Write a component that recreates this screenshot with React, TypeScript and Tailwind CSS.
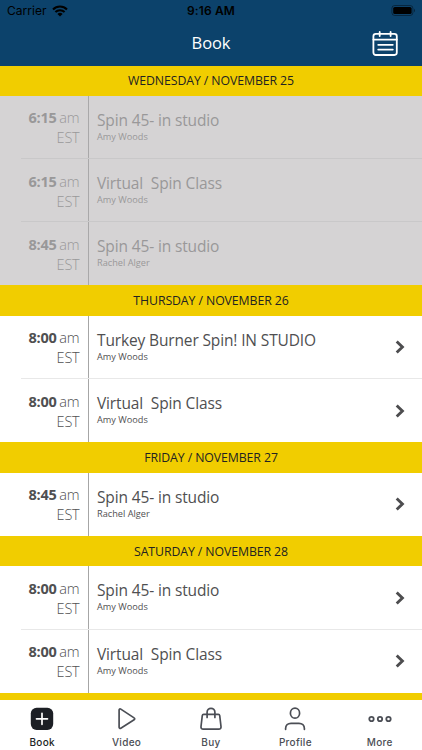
interface IClassItem {
    time: string;
    title: string;
    teacher: string;
}

interface IDay {
    label: string;
    past?: boolean;
    classes: IClassItem[];
}

const days: IDay[] = [
    {
        label: 'WEDNESDAY / NOVEMBER 25',
        past: true,
        classes: [
            { time: '6:15', title: 'Spin 45- in studio', teacher: 'Amy Woods' },
            { time: '6:15', title: 'Virtual  Spin Class', teacher: 'Amy Woods' },
            { time: '8:45', title: 'Spin 45- in studio', teacher: 'Rachel Alger' },
        ],
    },
    {
        label: 'THURSDAY / NOVEMBER 26',
        classes: [
            { time: '8:00', title: 'Turkey Burner Spin! IN STUDIO', teacher: 'Amy Woods' },
            { time: '8:00', title: 'Virtual  Spin Class', teacher: 'Amy Woods' },
        ],
    },
    {
        label: 'FRIDAY / NOVEMBER 27',
        classes: [
            { time: '8:45', title: 'Spin 45- in studio', teacher: 'Rachel Alger' },
        ],
    },
    {
        label: 'SATURDAY / NOVEMBER 28',
        classes: [
            { time: '8:00', title: 'Spin 45- in studio', teacher: 'Amy Woods' },
            { time: '8:00', title: 'Virtual  Spin Class', teacher: 'Amy Woods' },
        ],
    },
];

const StatusBar = () => {
    return (
        <div className="grid grid-cols-3 items-center h-[22px] pl-[7px] pr-[6px] text-black font-['Inter',sans-serif]">
            <div className="flex items-center gap-[5px]">
                <span className="text-[12px] leading-none tracking-[0.05px]">Carrier</span>
                <svg className="w-[16px] h-[12px] -mt-[1px]" viewBox="0 0 16 12" fill="none" stroke="currentColor" strokeWidth="2.1">
                    <path d="M1 4.4a10 10 0 0 1 14 0" />
                    <path d="M3.4 7.1a6.5 6.5 0 0 1 9.2 0" />
                    <path d="M8 11.6L5.4 9a3.7 3.7 0 0 1 5.2 0z" fill="currentColor" stroke="none" />
                </svg>
            </div>
            <div className="text-center text-[12px] leading-none font-semibold tracking-[0.15px] pr-[1px]">9:16 AM</div>
            <svg className="w-[25px] h-[11px] justify-self-end -mt-[1px]" viewBox="0 0 25 11">
                <rect x="0.9" y="0.5" width="21" height="10" rx="2.8" fill="none" stroke="#000" strokeOpacity="0.4" />
                <rect x="2.2" y="1.9" width="18.4" height="7.2" rx="1.6" />
                <path d="M23 3.8c1.3.5 1.3 2.9 0 3.4z" fillOpacity="0.45" />
            </svg>
        </div>
    )
}

const Header = () => {
    return (
        <div className="h-[65.5px] shrink-0 bg-[#0c426b]">
            <StatusBar />
            <div className="grid grid-cols-3 items-center h-[43px] pr-[24px]">
                <p className="col-start-2 text-center text-[16.5px] leading-none tracking-[-0.1px] text-white pl-[24px]">Book</p>
                <svg className="w-[26px] h-[26px] justify-self-end" viewBox="0 0 26 26" fill="none" stroke="#fff" strokeWidth="1.8" strokeLinecap="round">
                    <rect x="1.4" y="2.8" width="23.4" height="21.2" rx="2.4" />
                    <path d="M1.400 8.600h23.400M7.700 1v4M18.600 1v4M6.200 13.800h14.600M6.200 18.600h14.600" />
                </svg>
            </div>
        </div>
    )
}

const ClassRow = ({ item, past, last }: { item: IClassItem; past?: boolean; last: boolean }) => {
    return (
        <div className={past ? 'flex h-[63.17px] text-[#999899]' : 'flex h-[63.17px] text-[#4f4f51]'}>
            <div className="w-[20.5px] shrink-0" />
            <div className={`flex flex-1 ${last ? '' : past ? 'border-b border-[#c9c8c9]' : 'border-b border-[#e8e8e8]'}`}>
                <div className={`w-[68px] shrink-0 border-r pr-[8px] pt-[12.4px] text-right text-[14.5px] leading-[20px] ${past ? 'border-[#a9a8a9]' : 'border-[#a6a6a6]'}`}>
                    <p className="whitespace-nowrap">
                        <span className="font-bold tracking-[-0.2px]">{item.time}</span>
                        <span className="ml-[2.5px] font-light tracking-[-0.1px]">am</span>
                    </p>
                    <p className="font-light tracking-[-0.2px]">EST</p>
                </div>
                <div className="flex-1 pl-[8.5px] pt-[14px]">
                    <p className="text-[15.5px] leading-[20px] tracking-[-0.14px] whitespace-pre">{item.title}</p>
                    <p className="text-[9.2px] leading-[13px]">{item.teacher}</p>
                </div>
                {!past && (
                    <svg className="w-[10px] h-[14px] self-center mr-[17px]" viewBox="0 0 10 14" fill="none" stroke="#4d4d4f" strokeWidth="2.9">
                        <path d="M1.7 1.5L7.4 7l-5.700 5.500" />
                    </svg>
                )}
            </div>
        </div>
    )
}

const DaySection = ({ day }: { day: IDay }) => {
    return (
        <div className={day.past ? 'shrink-0 bg-[#d5d3d4]' : 'shrink-0 bg-white'}>
            <div className="flex items-center justify-center h-[30.5px] bg-[#f1cd00] pt-[1.4px] text-[12.3px] tracking-[-0.09px] text-[#222]">
                {day.label}
            </div>
            {day.classes.map((item, i) => (
                <ClassRow key={i} item={item} past={day.past} last={i === day.classes.length - 1} />
            ))}
        </div>
    )
}

const TabBar = () => {
    return (
        <div className="grid grid-cols-5 h-[50px] shrink-0 bg-white text-[#4b4e55] font-['Inter',sans-serif] text-[10px] font-medium tracking-[0.3px]">
            <div className="flex flex-col items-center pt-[7px] text-[#1c1f25]">
                <svg className="w-[24px] h-[24px]" viewBox="0 0 24 24">
                    <rect x="0.8" y="0.7" width="22.4" height="22.2" rx="5.8" fill="currentColor" />
                    <path d="M12 6.3v11M6.5 11.8h11" stroke="#fff" strokeWidth="1.7" strokeLinecap="round" />
                </svg>
                <span className="mt-[4px] leading-[14px]">Book</span>
            </div>
            <div className="flex flex-col items-center pt-[7px]">
                <svg className="w-[24px] h-[24px]" viewBox="0 0 24 24" fill="none" stroke="currentColor" strokeWidth="1.7" strokeLinejoin="round">
                    <path d="M4.1 3v17.3c0 1 .9 1.4 1.7.9l13.3-8.5c.8-.5.8-1.3 0-1.8L5.800 2.100C5 1.600 4.100 2 4.100 3z" />
                </svg>
                <span className="mt-[4px] leading-[14px]">Video</span>
            </div>
            <div className="flex flex-col items-center pt-[7px]">
                <svg className="w-[24px] h-[24px]" viewBox="0 0 24 24" fill="none" stroke="currentColor" strokeWidth="1.7" strokeLinecap="round" strokeLinejoin="round">
                    <path d="M4.700 7.300h14.600c.8 0 1.300.4 1.400 1.200l1.300 11c.2 1.600-.7 2.700-2.200 2.700H4.200C2.700 22.200 1.800 21.100 2 19.500l1.300-11c.1-.8.600-1.200 1.400-1.200z" />
                    <path d="M8.100 10.500V5.200a3.900 3.900 0 0 1 7.800 0v5.300" />
                </svg>
                <span className="mt-[4px] leading-[14px]">Buy</span>
            </div>
            <div className="flex flex-col items-center pt-[7px]">
                <svg className="w-[24px] h-[24px]" viewBox="0 0 24 24" fill="none" stroke="currentColor" strokeWidth="1.7" strokeLinecap="round">
                    <ellipse cx="12" cy="6.200" rx="4.600" ry="5" />
                    <path d="M2.600 22.300v-.8c0-3.200 2.300-5.200 5.400-5.200h8c3.100 0 5.400 2 5.400 5.200v.8" />
                </svg>
                <span className="mt-[4px] leading-[14px]">Profile</span>
            </div>
            <div className="flex flex-col items-center pt-[7px]">
                <svg className="w-[24px] h-[24px]" viewBox="0 0 24 24" fill="none" stroke="currentColor" strokeWidth="1.8">
                    <circle cx="3.500" cy="12" r="2.200" />
                    <circle cx="12" cy="12" r="2.200" />
                    <circle cx="20.500" cy="12" r="2.200" />
                </svg>
                <span className="mt-[4px] leading-[14px]">More</span>
            </div>
        </div>
    )
}

export default function App() {
    return (
        <div className="flex flex-col h-[750px] w-[422px] overflow-hidden bg-white font-['Open_Sans',sans-serif]">
            <Header />
            <div className="flex flex-col flex-1 min-h-0 overflow-hidden">
                {days.map(day => <DaySection key={day.label} day={day} />)}
                {/* top edge of the next day's band */}
                <div className="flex-1 bg-[#f1cd00]" />
            </div>
            <TabBar />
        </div>
    )
}
